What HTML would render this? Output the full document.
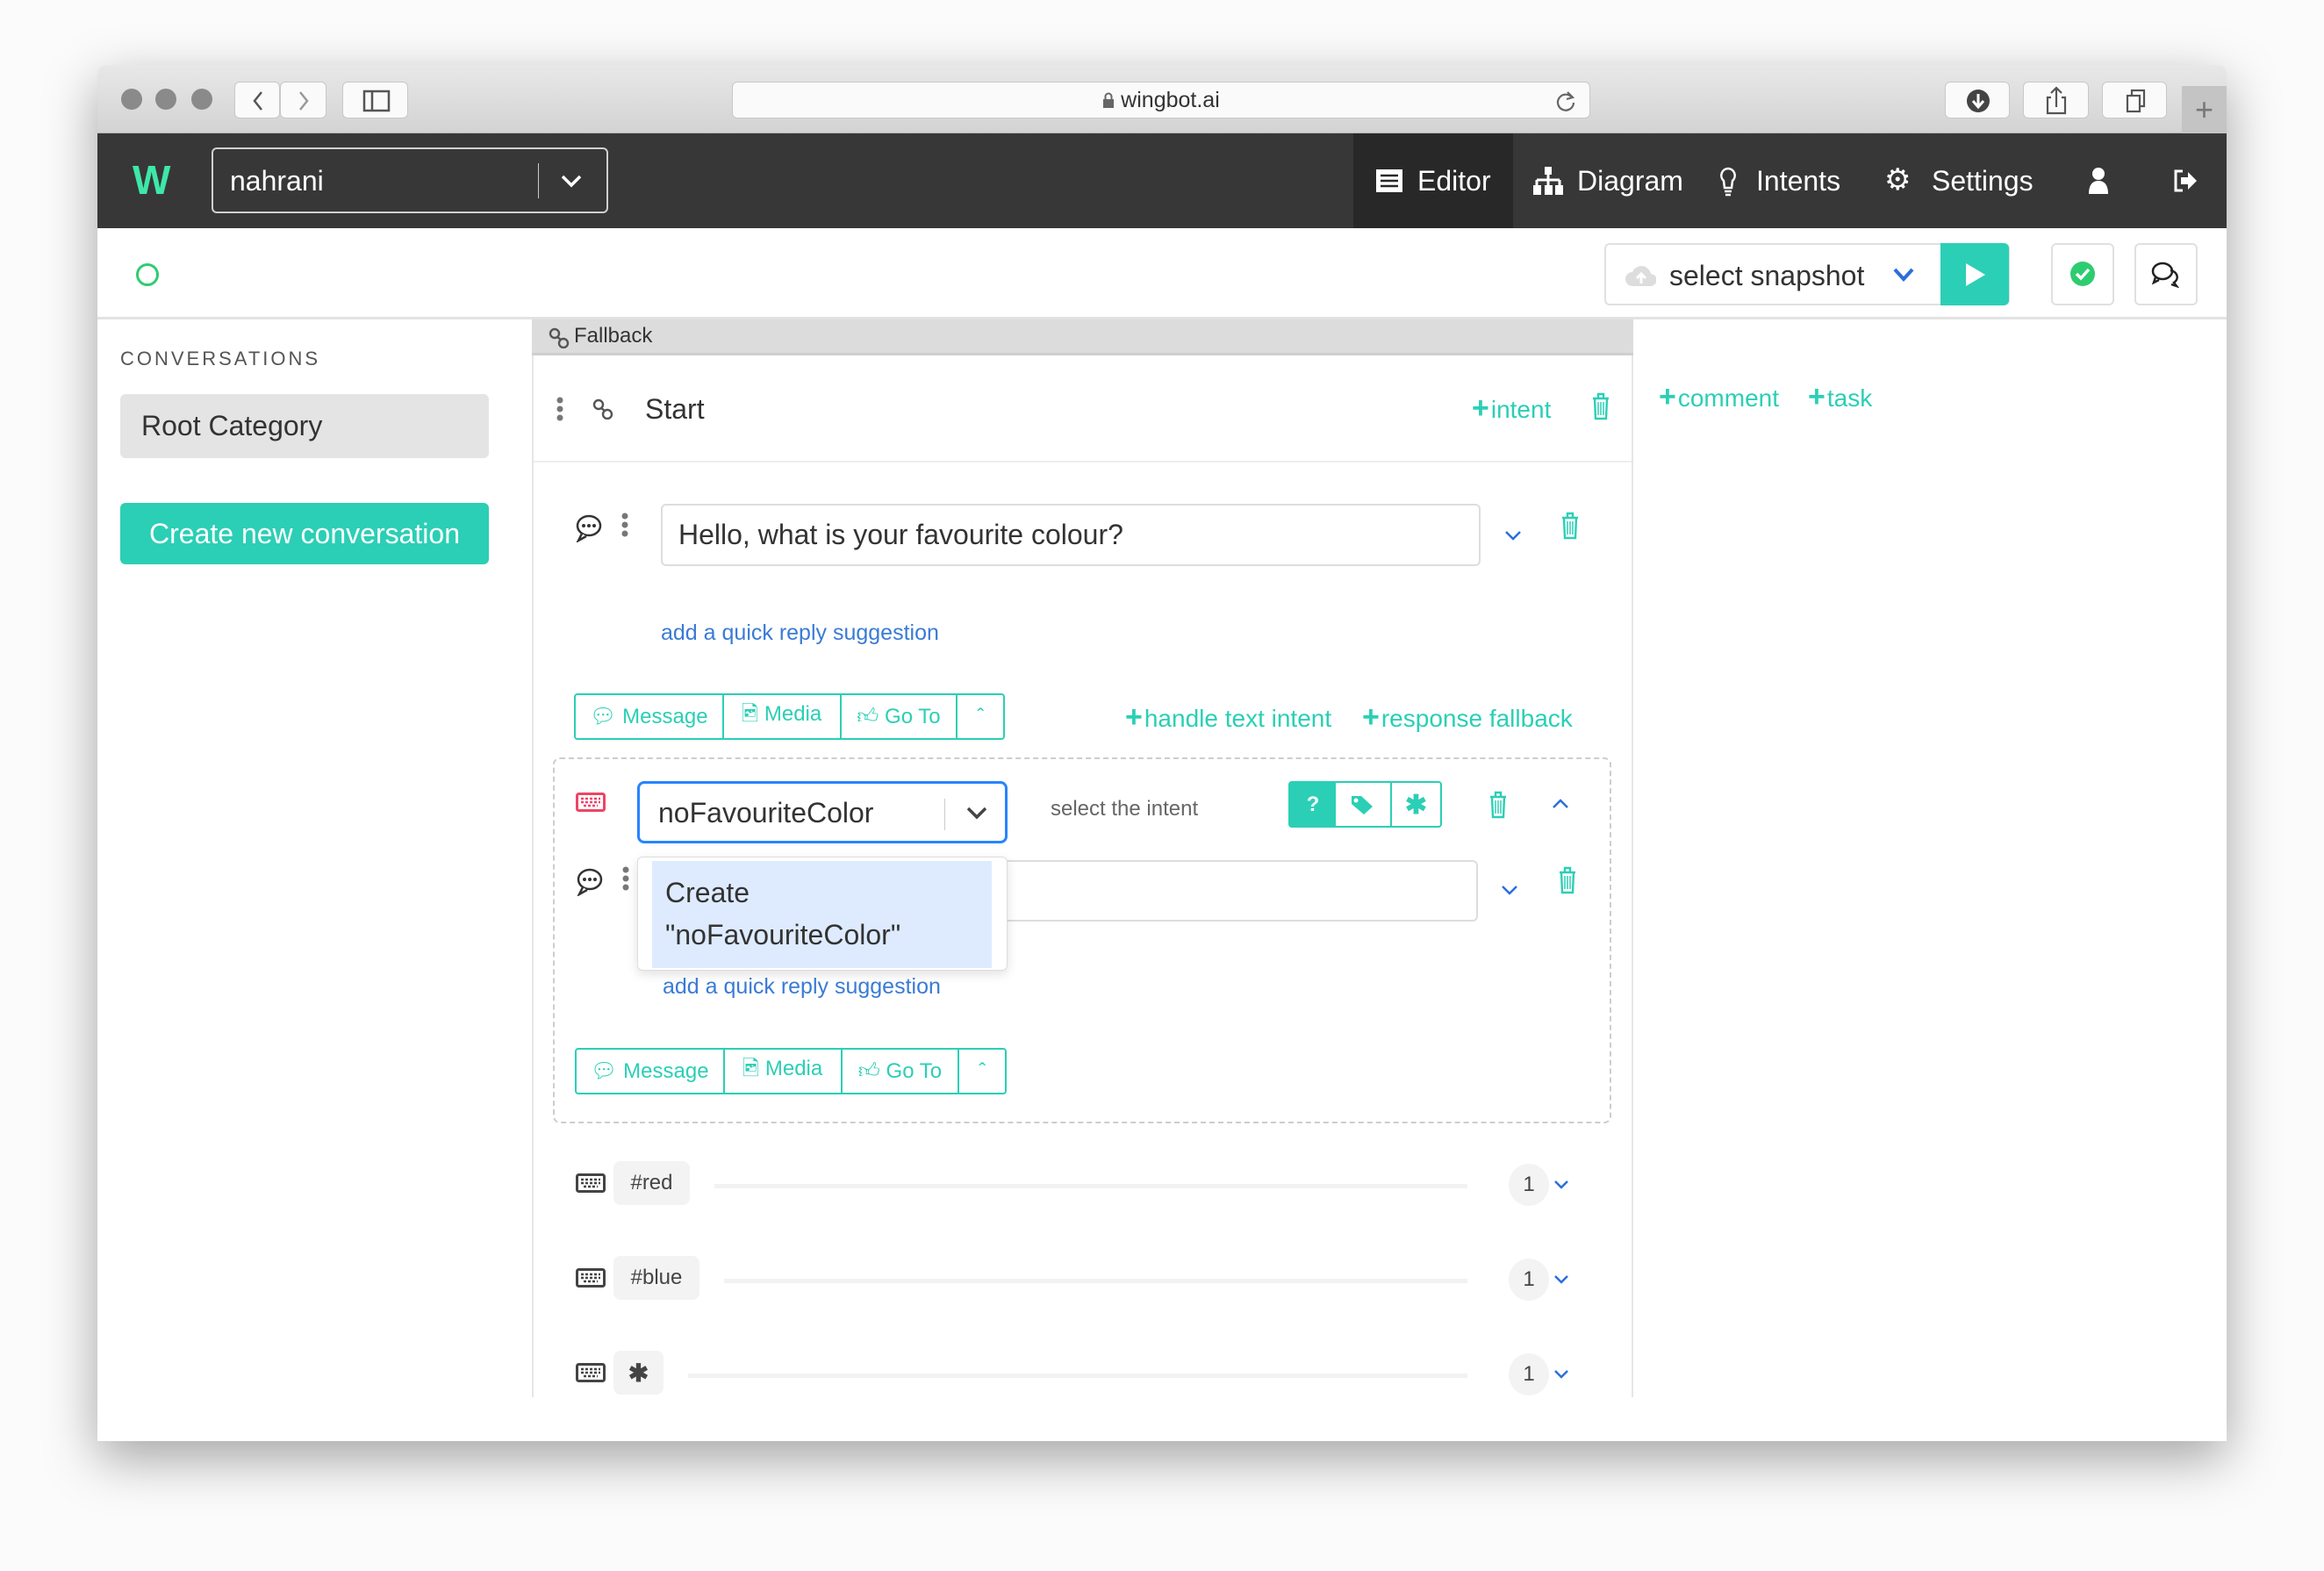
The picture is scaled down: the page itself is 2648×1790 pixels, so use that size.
<!DOCTYPE html>
<html><head><meta charset="utf-8"><style>
*{box-sizing:border-box;margin:0;padding:0}
body{width:2648px;height:1790px;background:#fbfbfb;font-family:"Liberation Sans",sans-serif;position:relative;overflow:hidden;color:#333}
.a{position:absolute}
.win{left:111px;top:74px;width:2426px;height:1568px;background:#fff;border-radius:10px 10px 0 0;box-shadow:0 20px 60px rgba(0,0,0,.35);overflow:hidden}
.tb{left:0;top:0;width:2426px;height:78px;background:linear-gradient(#e8e8e8,#d3d3d3);border-bottom:1px solid #b5b5b5}
.tl{width:24px;height:24px;border-radius:50%;background:#8a8a8a;top:27px}
.sb{background:#fafafa;border:1px solid #c8c8c8;border-radius:6px;top:19px;height:42px}
.nav{left:0;top:78px;width:2426px;height:108px;background:#373737}
.ni{color:#fff;font-size:32px;top:36px}
.teal{color:#2bcfb5}
.blue{color:#3a7bd5}
.grp{border:2px solid #2bcfb5;border-radius:4px;display:flex;height:53px}
.grp div{border-right:2px solid #2bcfb5;color:#2bcfb5;font-size:24px;display:flex;align-items:center;justify-content:center;gap:8px}
.grp div:last-child{border-right:none}
.tag{background:#f3f3f3;border-radius:8px;font-size:24px;color:#444;display:flex;align-items:center;justify-content:center;height:50px}
.line{height:5px;background:#f2f2f2}
.cnt{width:46px;height:48px;border-radius:50%;background:#f3f3f3;font-size:24px;display:flex;align-items:center;justify-content:center;color:#444}
.pl{font-weight:bold;font-size:34px;margin-right:2px}
</style></head><body>
<svg width="0" height="0" style="position:absolute">
 <defs>
  <g id="tr"><path d="M3 8h18M9 8V3h6v5M5 8l1 23h12l1-23" stroke="#2bcfb5" stroke-width="2.4" fill="none"/><path d="M9 12v15M12 12v15M15 12v15" stroke="#2bcfb5" stroke-width="1.5"/></g>
  <g id="lk"><circle cx="7" cy="7" r="5" stroke="#555" stroke-width="2.4" fill="none"/><circle cx="17" cy="18" r="5" stroke="#555" stroke-width="2.4" fill="none"/><path d="M10 11l4 3" stroke="#555" stroke-width="2.4"/></g>
 </defs>
</svg>
<div class="a win">
 <div class="a tb">
  <div class="a tl" style="left:27px"></div><div class="a tl" style="left:66px"></div><div class="a tl" style="left:107px"></div>
  <div class="a sb" style="left:156px;width:52px"><svg width="52" height="42"><path d="M30 11 L22 21 L30 31" stroke="#555" stroke-width="2.5" fill="none"/></svg></div>
  <div class="a sb" style="left:208px;width:53px"><svg width="52" height="42"><path d="M22 11 L30 21 L22 31" stroke="#999" stroke-width="2.5" fill="none"/></svg></div>
  <div class="a sb" style="left:279px;width:75px"><svg width="75" height="42"><rect x="24" y="10" width="28" height="22" stroke="#555" stroke-width="2.5" fill="none"/><line x1="33" y1="10" x2="33" y2="32" stroke="#555" stroke-width="2.5"/></svg></div>
  <div class="a sb" style="left:723px;width:978px;text-align:center;font-size:25px;line-height:40px;color:#333"><svg width="14" height="18" style="vertical-align:-1px"><rect x="1" y="8" width="12" height="10" fill="#666"/><path d="M3.5 8V5a3.5 3.5 0 0 1 7 0v3" stroke="#666" stroke-width="2" fill="none"/></svg> wingbot.ai<svg class="a" style="right:14px;top:8px" width="26" height="26"><path d="M20 9a9 9 0 1 0 2 6" stroke="#666" stroke-width="2.2" fill="none"/><path d="M15 3l6 6-7 2" stroke="#666" stroke-width="2.2" fill="none"/></svg></div>
  <div class="a sb" style="left:2105px;width:74px"><svg width="74" height="42"><circle cx="37" cy="21" r="13" fill="#444"/><path d="M37 13v14M31 21l6 7 6-7" stroke="#fff" stroke-width="3" fill="none"/></svg></div>
  <div class="a sb" style="left:2194px;width:75px"><svg width="75" height="42"><path d="M31 17h-4v18h20V17h-4M37 28V6M31 12l6-6 6 6" stroke="#555" stroke-width="2.2" fill="none"/></svg></div>
  <div class="a sb" style="left:2284px;width:74px"><svg width="74" height="42"><rect x="28" y="15" width="14" height="18" stroke="#555" stroke-width="2.2" fill="none"/><path d="M33 15V9h14v18h-5" stroke="#555" stroke-width="2.2" fill="none"/></svg></div>
  <div class="a" style="left:2375px;top:24px;width:51px;height:54px;background:#c4c4c4;color:#777;font-size:36px;text-align:center;line-height:54px">+</div>
 </div>
 <div class="a nav">
  <div class="a" style="left:40px;top:26px;font-size:46px;font-weight:bold;color:#3de8a8">W</div>
  <div class="a" style="left:130px;top:16px;width:452px;height:75px;border:2px solid #d0d0d0;border-radius:6px"></div>
  <div class="a" style="left:151px;top:36px;font-size:32px;color:#fff">nahrani</div>
  <div class="a" style="left:502px;top:34px;width:1px;height:40px;background:#ccc"></div>
  <svg class="a" style="left:525px;top:44px" width="30" height="20"><path d="M5 5l10 10 10-10" stroke="#fff" stroke-width="3.5" fill="none"/></svg>
  <div class="a" style="left:1431px;top:0;width:182px;height:108px;background:#282828"></div>
  <svg class="a" style="left:1456px;top:40px" width="32" height="28"><rect x="1" y="1" width="30" height="26" fill="#fff"/><path d="M6 8h20M6 14h20M6 20h20" stroke="#282828" stroke-width="2.5"/></svg>
  <div class="a ni" style="left:1504px">Editor</div>
  <svg class="a" style="left:1636px;top:38px" width="34" height="32"><rect x="13" y="0" width="8" height="9" fill="#fff"/><path d="M17 9v6M4 15h26M4 15v6M17 15v6M30 15v6" stroke="#fff" stroke-width="3" fill="none"/><rect x="0" y="21" width="9" height="11" fill="#fff"/><rect x="13" y="21" width="9" height="11" fill="#fff"/><rect x="25" y="21" width="9" height="11" fill="#fff"/></svg>
  <div class="a ni" style="left:1686px">Diagram</div>
  <svg class="a" style="left:1848px;top:38px" width="20" height="34"><path d="M10 2a8 8 0 0 0-5 14l1 8h8l1-8a8 8 0 0 0-5-14z" stroke="#fff" stroke-width="2.5" fill="none"/><path d="M6 28h8M7 32h6" stroke="#fff" stroke-width="2.5"/></svg>
  <div class="a ni" style="left:1890px">Intents</div>
  <div class="a ni" style="left:2036px;font-size:34px;top:33px">&#9881;&#xFE0E;</div>
  <div class="a ni" style="left:2090px">Settings</div>
  <svg class="a" style="left:2268px;top:38px" width="24" height="32"><circle cx="12" cy="8" r="7" fill="#fff"/><path d="M1 31c0-10 4-15 11-15s11 5 11 15z" fill="#fff"/></svg>
  <svg class="a" style="left:2364px;top:40px" width="30" height="28"><path d="M12 3H4v22h8" stroke="#fff" stroke-width="3" fill="none"/><path d="M10 10h8V4l10 10-10 10v-6h-8z" fill="#fff"/></svg>
 </div>
 <div class="a" style="left:0;top:186px;width:2426px;height:104px;background:#fff;border-bottom:3px solid #e2e2e2"></div>
 <div class="a" style="left:44px;top:226px;width:26px;height:26px;border:3px solid #2ecc71;border-radius:50%"></div>
 <div class="a" style="left:1717px;top:203px;width:462px;height:71px;border:2px solid #e0e0e0;border-radius:6px"></div>
 <svg class="a" style="left:1740px;top:224px" width="36" height="30"><path d="M9 28a8 8 0 0 1 0-16 11 11 0 0 1 21 2 7 7 0 0 1-1 14z" fill="#ddd"/><path d="M19 25v-10M14 19l5-5 5 5" stroke="#fff" stroke-width="3" fill="none"/></svg>
 <div class="a" style="left:1791px;top:222px;font-size:32px;color:#333">select snapshot</div>
 <svg class="a" style="left:2044px;top:228px" width="28" height="22"><path d="M4 5l10 11 10-11" stroke="#2a6fdb" stroke-width="4" fill="none"/></svg>
 <div class="a" style="left:2100px;top:203px;width:78px;height:71px;background:#2bcfb5;border-radius:0 6px 6px 0"></div>
 <svg class="a" style="left:2126px;top:224px" width="28" height="30"><path d="M3 2l22 13L3 28z" fill="#fff"/></svg>
 <div class="a" style="left:2226px;top:203px;width:72px;height:71px;border:2px solid #e0e0e0;border-radius:6px"></div>
 <svg class="a" style="left:2247px;top:223px" width="30" height="30"><circle cx="15" cy="15" r="14" fill="#2ecc71"/><path d="M8 15l5 5 9-10" stroke="#fff" stroke-width="3.5" fill="none"/></svg>
 <div class="a" style="left:2321px;top:203px;width:72px;height:71px;border:2px solid #e0e0e0;border-radius:6px"></div>
 <svg class="a" style="left:2340px;top:224px" width="34" height="30"><ellipse cx="13" cy="11" rx="11" ry="9" stroke="#222" stroke-width="2.5" fill="#fff"/><path d="M22 10a10 8 0 0 1 4 14l3 4-6-2" stroke="#222" stroke-width="2.5" fill="none"/><path d="M5 18l-2 6 6-3" stroke="#222" stroke-width="2.5" fill="none"/></svg>

 <!-- sidebar -->
 <div class="a" style="left:26px;top:322px;font-size:22px;letter-spacing:3px;color:#555">CONVERSATIONS</div>
 <div class="a" style="left:26px;top:375px;width:420px;height:73px;background:#e4e4e4;border-radius:6px;font-size:32px;line-height:73px;padding-left:24px;color:#333">Root Category</div>
 <div class="a" style="left:26px;top:499px;width:420px;height:70px;background:#2bcfb5;border-radius:6px;font-size:32px;line-height:70px;text-align:center;color:#fff">Create new conversation</div>

 <!-- column -->
 <div class="a" style="left:495px;top:290px;width:1255px;height:1228px;border-left:2px solid #e6e6e6;border-right:2px solid #e6e6e6"></div>
 <div class="a" style="left:495px;top:290px;width:1255px;height:41px;background:#dcdcdc;border-bottom:3px solid #cfcfcf;font-size:24px;line-height:38px;padding-left:48px;color:#333">Fallback</div>
 <svg class="a" style="left:514px;top:299px" width="24" height="24"><use href="#lk"/></svg>
 <div class="a" style="left:497px;top:451px;width:1251px;height:2px;background:#eee"></div>
 <svg class="a" style="left:522px;top:378px" width="10" height="30"><circle cx="5" cy="4" r="3.5" fill="#777"/><circle cx="5" cy="14" r="3.5" fill="#777"/><circle cx="5" cy="24" r="3.5" fill="#777"/></svg>
 <svg class="a" style="left:564px;top:380px" width="24" height="24"><use href="#lk"/></svg>
 <div class="a" style="left:624px;top:374px;font-size:32px;color:#333">Start</div>
 <div class="a teal" style="left:1566px;top:372px;font-size:28px"><span class="pl">+</span>intent</div>
 <svg class="a" style="left:1701px;top:372px" width="24" height="34"><use href="#tr"/></svg>
 <div class="a teal" style="left:1779px;top:359px;font-size:28px"><span class="pl">+</span>comment</div>
 <div class="a teal" style="left:1949px;top:359px;font-size:28px"><span class="pl">+</span>task</div>

 <!-- message 1 -->
 <svg class="a" style="left:544px;top:512px" width="32" height="32"><ellipse cx="16" cy="13" rx="13" ry="11" stroke="#333" stroke-width="2.5" fill="none"/><path d="M8 22l-4 8 9-5" stroke="#333" stroke-width="2.5" fill="#fff"/><circle cx="10" cy="13" r="2" fill="#333"/><circle cx="16" cy="13" r="2" fill="#333"/><circle cx="22" cy="13" r="2" fill="#333"/></svg>
 <svg class="a" style="left:596px;top:510px" width="10" height="30"><circle cx="5" cy="4" r="3.5" fill="#777"/><circle cx="5" cy="14" r="3.5" fill="#777"/><circle cx="5" cy="24" r="3.5" fill="#777"/></svg>
 <div class="a" style="left:642px;top:500px;width:934px;height:71px;border:2px solid #ddd;border-radius:6px;font-size:32px;line-height:67px;padding-left:18px;color:#333">Hello, what is your favourite colour?</div>
 <svg class="a" style="left:1602px;top:528px" width="22" height="16"><path d="M3 4l8 8 8-8" stroke="#2a6fdb" stroke-width="2.5" fill="none"/></svg>
 <svg class="a" style="left:1666px;top:508px" width="24" height="34"><use href="#tr"/></svg>
 <div class="a blue" style="left:642px;top:633px;font-size:25px">add a quick reply suggestion</div>
 <div class="a grp" style="left:543px;top:716px;width:491px">
  <div style="width:170px">&#128172;&#xFE0E; Message</div><div style="width:135px">&#128443;&#xFE0E; Media</div><div style="width:134px">&#128077;&#xFE0E; Go To</div><div style="width:52px">&#710;</div>
 </div>
 <div class="a teal" style="left:1171px;top:724px;font-size:28px"><span class="pl">+</span>handle text intent</div>
 <div class="a teal" style="left:1441px;top:724px;font-size:28px"><span class="pl">+</span>response fallback</div>

 <!-- dashed box -->
 <div class="a" style="left:519px;top:789px;width:1206px;height:417px;border:2px dashed #cdcdcd;border-radius:8px"></div>
 <svg class="a" style="left:545px;top:829px" width="34" height="22"><rect x="1.5" y="1.5" width="31" height="19" rx="2" stroke="#ee4466" stroke-width="3" fill="none"/><path d="M6 7h22M6 11h22M9 15h16" stroke="#ee4466" stroke-width="2.5" stroke-dasharray="3 2"/></svg>
 <div class="a" style="left:615px;top:816px;width:422px;height:71px;border:3px solid #2684ff;border-radius:8px"></div>
 <div class="a" style="left:639px;top:834px;font-size:32px;color:#333">noFavouriteColor</div>
 <div class="a" style="left:965px;top:836px;width:1px;height:36px;background:#ccc"></div>
 <svg class="a" style="left:988px;top:842px" width="28" height="20"><path d="M4 5l10 10 10-10" stroke="#444" stroke-width="3.5" fill="none"/></svg>
 <div class="a" style="left:1086px;top:834px;font-size:24px;color:#666">select the intent</div>
 <div class="a" style="left:1357px;top:816px;width:175px;height:53px;border:2px solid #2bcfb5;border-radius:4px;display:flex">
  <div style="width:52px;background:#2bcfb5;color:#fff;font-weight:bold;font-size:24px;text-align:center;line-height:49px">?</div>
  <div style="width:64px;border-right:2px solid #2bcfb5;display:flex;align-items:center;justify-content:center"><svg width="30" height="26"><path d="M2 3h11l13 12-10 9L2 12z" fill="#2bcfb5"/><circle cx="7" cy="8" r="2.5" fill="#fff"/></svg></div>
  <div style="flex:1;color:#2bcfb5;font-size:30px;font-weight:bold;text-align:center;line-height:52px">&#10033;</div>
 </div>
 <svg class="a" style="left:1584px;top:826px" width="24" height="34"><use href="#tr"/></svg>
 <svg class="a" style="left:1656px;top:834px" width="22" height="16"><path d="M3 12l8-8 8 8" stroke="#2a6fdb" stroke-width="2.5" fill="none"/></svg>

 <!-- message 2 -->
 <svg class="a" style="left:545px;top:915px" width="32" height="32"><ellipse cx="16" cy="13" rx="13" ry="11" stroke="#333" stroke-width="2.5" fill="none"/><path d="M8 22l-4 8 9-5" stroke="#333" stroke-width="2.5" fill="#fff"/><circle cx="10" cy="13" r="2" fill="#333"/><circle cx="16" cy="13" r="2" fill="#333"/><circle cx="22" cy="13" r="2" fill="#333"/></svg>
 <svg class="a" style="left:597px;top:913px" width="10" height="30"><circle cx="5" cy="4" r="3.5" fill="#777"/><circle cx="5" cy="14" r="3.5" fill="#777"/><circle cx="5" cy="24" r="3.5" fill="#777"/></svg>
 <div class="a" style="left:642px;top:906px;width:931px;height:70px;border:2px solid #ddd;border-radius:6px"></div>
 <svg class="a" style="left:1598px;top:932px" width="22" height="16"><path d="M3 4l8 8 8-8" stroke="#2a6fdb" stroke-width="2.5" fill="none"/></svg>
 <svg class="a" style="left:1663px;top:912px" width="24" height="34"><use href="#tr"/></svg>
 <div class="a" style="left:615px;top:902px;width:422px;height:130px;background:#fff;border:1px solid #ddd;border-radius:6px;box-shadow:0 4px 12px rgba(0,0,0,.12)"></div>
 <div class="a" style="left:632px;top:907px;width:387px;height:122px;background:#deebff;font-size:32px;line-height:48px;padding:12px 0 0 15px;color:#333">Create<br>"noFavouriteColor"</div>
 <div class="a blue" style="left:644px;top:1036px;font-size:25px">add a quick reply suggestion</div>
 <div class="a grp" style="left:544px;top:1120px;width:492px">
  <div style="width:170px">&#128172;&#xFE0E; Message</div><div style="width:135px">&#128443;&#xFE0E; Media</div><div style="width:135px">&#128077;&#xFE0E; Go To</div><div style="width:52px">&#710;</div>
 </div>

 <!-- rows -->
 <svg class="a" style="left:545px;top:1263px" width="34" height="22"><rect x="1.5" y="1.5" width="31" height="19" rx="2" stroke="#444" stroke-width="3" fill="none"/><path d="M6 7h22M6 11h22M9 15h16" stroke="#444" stroke-width="2.5" stroke-dasharray="3 2"/></svg>
 <div class="a tag" style="left:588px;top:1249px;width:87px">#red</div>
 <div class="a line" style="left:703px;top:1275px;width:858px"></div>
 <div class="a cnt" style="left:1608px;top:1252px">1</div>
 <svg class="a" style="left:1658px;top:1269px" width="20" height="14"><path d="M3 3l7 7 7-7" stroke="#2a6fdb" stroke-width="2.5" fill="none"/></svg>

 <svg class="a" style="left:545px;top:1371px" width="34" height="22"><rect x="1.5" y="1.5" width="31" height="19" rx="2" stroke="#444" stroke-width="3" fill="none"/><path d="M6 7h22M6 11h22M9 15h16" stroke="#444" stroke-width="2.5" stroke-dasharray="3 2"/></svg>
 <div class="a tag" style="left:588px;top:1357px;width:98px">#blue</div>
 <div class="a line" style="left:714px;top:1383px;width:847px"></div>
 <div class="a cnt" style="left:1608px;top:1360px">1</div>
 <svg class="a" style="left:1658px;top:1377px" width="20" height="14"><path d="M3 3l7 7 7-7" stroke="#2a6fdb" stroke-width="2.5" fill="none"/></svg>

 <svg class="a" style="left:545px;top:1479px" width="34" height="22"><rect x="1.5" y="1.5" width="31" height="19" rx="2" stroke="#444" stroke-width="3" fill="none"/><path d="M6 7h22M6 11h22M9 15h16" stroke="#444" stroke-width="2.5" stroke-dasharray="3 2"/></svg>
 <div class="a tag" style="left:588px;top:1465px;width:57px;font-weight:bold;font-size:28px">&#10033;</div>
 <div class="a line" style="left:673px;top:1491px;width:888px"></div>
 <div class="a cnt" style="left:1608px;top:1468px">1</div>
 <svg class="a" style="left:1658px;top:1485px" width="20" height="14"><path d="M3 3l7 7 7-7" stroke="#2a6fdb" stroke-width="2.5" fill="none"/></svg>
 <div class="a" style="left:490px;top:1518px;width:1270px;height:50px;background:#fff"></div>
</div>
</body></html>
